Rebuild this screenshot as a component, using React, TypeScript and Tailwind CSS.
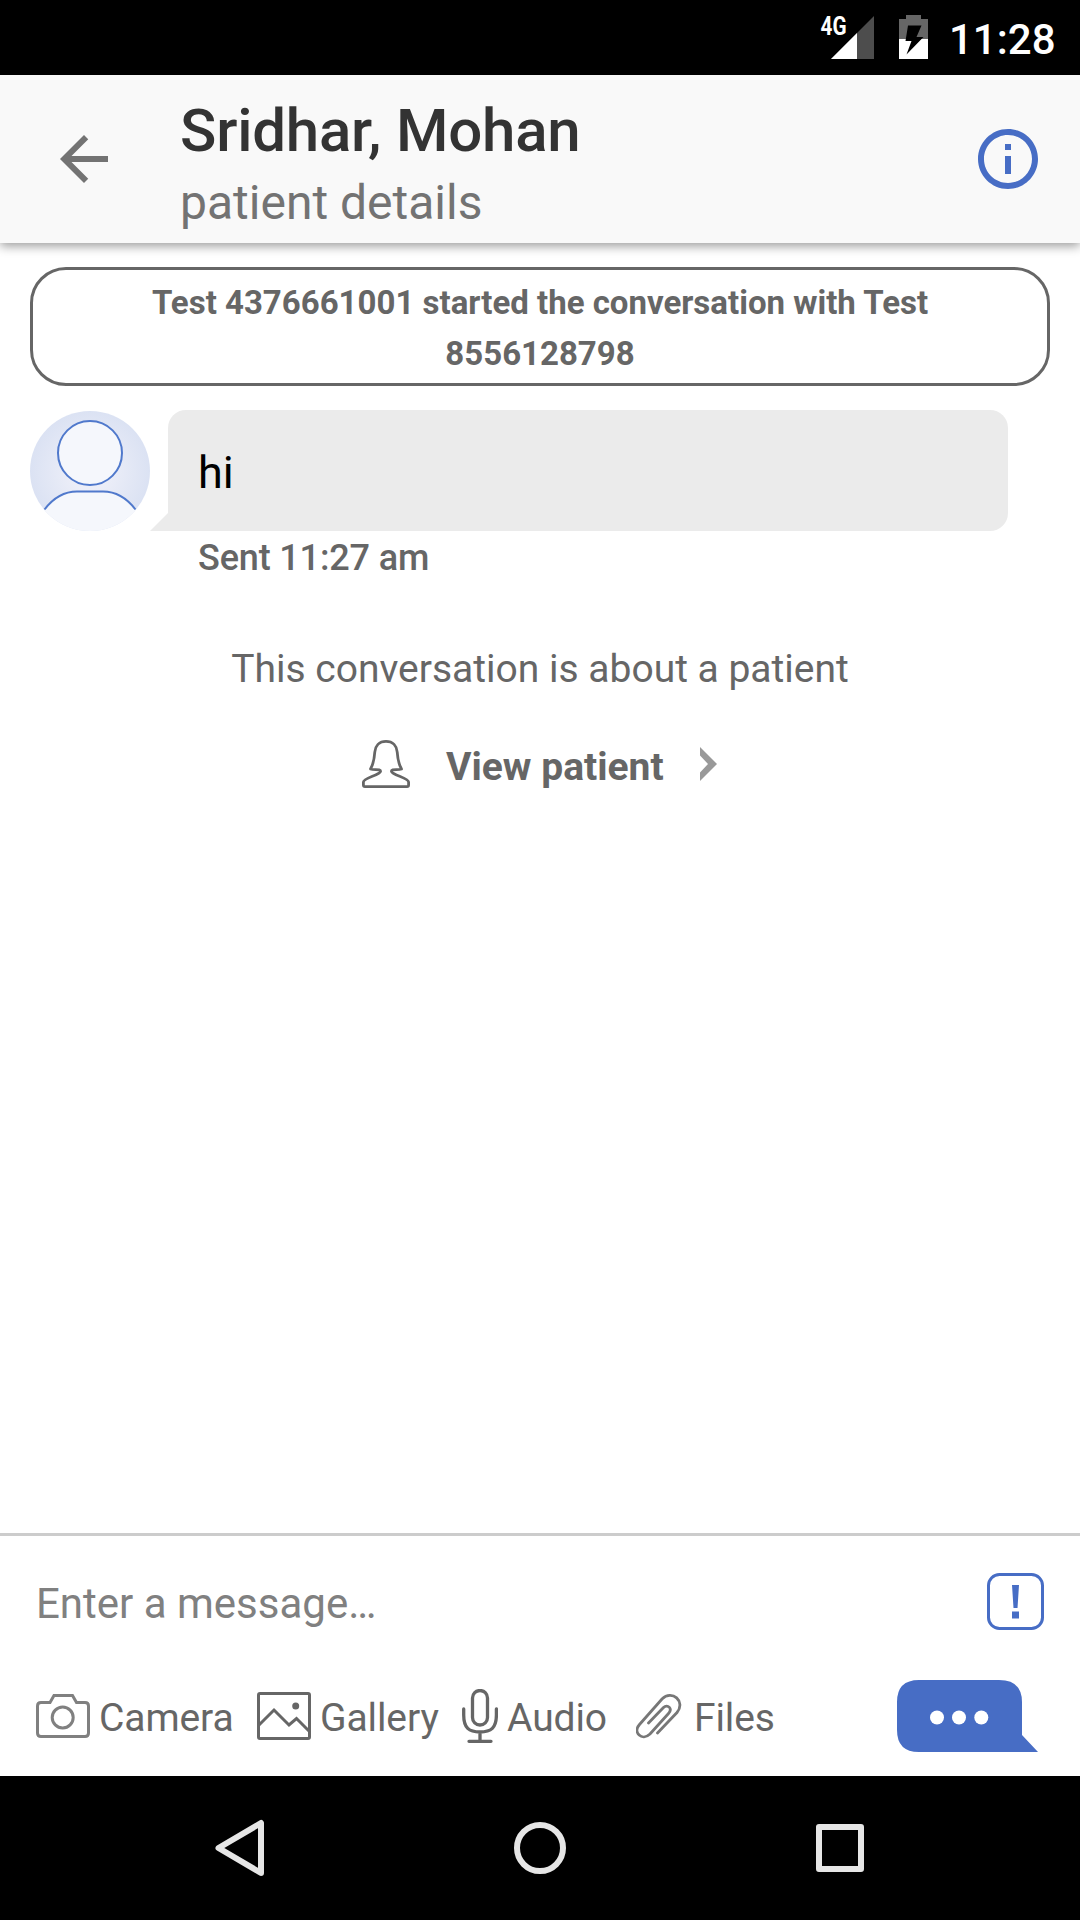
import React from "react";

const BLUE = "#476dc5";

function StatusBar() {
  return (
    <div className="flex h-[75px] shrink-0 items-start bg-black pl-[820px] text-white">
      <div className="flex w-[54px] shrink-0">
        <svg width="56" height="75" viewBox="820 0 56 75" className="shrink-0">
          <path d="M831 59 L874 16 V59 Z" fill="#4d4d4d" />
          <path d="M831 59 L857 33 V59 Z" fill="#fff" />
          <text x="820.5" y="35" fontFamily="Roboto" fontWeight="700" fontSize="25" textLength="26" lengthAdjust="spacingAndGlyphs" fill="#fff">4G</text>
        </svg>
      </div>
      <svg width="29" height="75" viewBox="899 0 29 75" className="ml-[25px] shrink-0">
        <path d="M906 15 H921 V19 H928 V39 H899 V19 H906 Z" fill="#666" />
        <path d="M899 39 H928 V59 H899 Z" fill="#fff" />
        <path d="M908 25.5 H921.5 L916.5 37 H923.5 L906.5 54.500 L911.500 41 H905.500 Z" fill="#000" />
      </svg>
      <span className="ml-[21px] mt-[15px] text-[42px] leading-[49px] font-medium">11:28</span>
    </div>
  );
}

function Header() {
  return (
    <header className="relative z-10 flex h-[168px] shrink-0 items-center bg-[#f9f9f9] px-9 shadow-[0_3px_10px_rgba(0,0,0,0.4)]">
      <svg width="72" height="72" viewBox="0 0 24 24" className="ml-3 shrink-0">
        <path fill="#737373" d="M20 11H7.830l5.590-5.590L12 4l-8 8 8 8 1.410-1.410L7.830 13H20v-2z" />
      </svg>
      <div className="ml-[60px] flex flex-1 flex-col pt-[15px]">
        <h1 className="text-[60px] leading-[72px] font-medium tracking-[-0.2px] text-[#333]">Sridhar, Mohan</h1>
        <p className="text-[48px] leading-[72px] text-[#737373]">patient details</p>
      </div>
      <svg width="72" height="72" viewBox="0 0 24 24" className="shrink-0">
        <path fill={BLUE} d="M11 17h2v-6h-2v6zm1-15C6.480 2 2 6.480 2 12s4.480 10 10 10 10-4.480 10-10S17.520 2 12 2zm0 18c-4.410 0-8-3.590-8-8s3.590-8 8-8 8 3.590 8 8-3.590 8-8 8zM11 9h2V7h-2v2z" />
      </svg>
    </header>
  );
}

function Avatar() {
  return (
    <svg width="120" height="121" viewBox="30 410 120 121" className="shrink-0">
      <defs>
        <radialGradient id="halo">
          <stop offset="0.3" stopColor="#eceef8" />
          <stop offset="1" stopColor="#dbe2f3" />
        </radialGradient>
        <clipPath id="disc">
          <circle cx="90" cy="471" r="60" />
        </clipPath>
      </defs>
      <circle cx="90" cy="471" r="60" fill="url(#halo)" />
      <path d="M44 510 C54 497 64 491.500 77 491.500 H103 C116 491.500 126 497 136 510 L136 540 H44 Z" fill="#f5f7fc" clipPath="url(#disc)" />
      <path d="M44.500 509.500 C54 497 64 491.500 77 491.500 H103 C116 491.500 126 497 135.500 509.500" fill="none" stroke="#5079cc" strokeWidth="2" />
      <circle cx="90" cy="453" r="32" fill="#f5f7fc" stroke="#5079cc" strokeWidth="2" />
    </svg>
  );
}

function Message() {
  return (
    <div className="mt-6 flex">
      <Avatar />
      <svg width="18" height="18" viewBox="0 0 18 18" className="shrink-0 self-start mt-[103px]">
        <path d="M18 0 V18 H0 Z" fill="#ebebeb" />
      </svg>
      <div className="h-[121px] w-[840px] rounded-[18px] rounded-bl-none bg-[#ebebeb] px-[30px] pt-[36px]">
        <p className="text-[45px] leading-[53px] text-black">hi</p>
      </div>
    </div>
  );
}

function ToolLabel({ children }: { children: React.ReactNode }) {
  return <span className="block pt-[3px] text-[39px] leading-[46px] tracking-[-0.1px] text-[#666]">{children}</span>;
}

function Composer() {
  return (
    <section className="h-[243px] shrink-0 border-t-[3px] border-[#ccc] bg-white">
      <div className="flex h-[132px] items-center justify-between pl-9 pr-9">
        <span className="pt-[2px] text-[42px] leading-[49px] text-[#808080]">Enter a message…</span>
        <svg width="57" height="57" viewBox="0 0 57 57" className="mt-[-1px]">
          <rect x="1.500" y="1.500" width="54" height="54" rx="11" fill="none" stroke={BLUE} strokeWidth="3" />
          <path d="M25 12 H32 L30.500 35 H26.500 Z M25 38.500 H32 V45.500 H25 Z" fill={BLUE} />
        </svg>
      </div>
      <div className="flex h-[96px] items-center pl-9 pr-[42px]">
        <svg width="54" height="44" viewBox="36 1694 54 44" fill="none" stroke="#808080" strokeWidth="3" className="shrink-0">
          <path d="M41 1702.500 H50 L54 1695.500 H72.500 L76.500 1702.500 H85 Q88.500 1702.500 88.500 1706 V1733 Q88.500 1736.500 85 1736.500 H41 Q37.500 1736.500 37.500 1733 V1706 Q37.500 1702.500 41 1702.500 Z" />
          <circle cx="62.700" cy="1717.500" r="10.500" />
        </svg>
        <span className="ml-[9px] w-[148px]"><ToolLabel>Camera</ToolLabel></span>
        <svg width="54" height="48" viewBox="257 1692 54 48" fill="none" stroke="#666" strokeWidth="3" className="shrink-0 ml-[10px]">
          <rect x="258.500" y="1693.500" width="51" height="45" rx="1.500" />
          <path d="M259 1725 L274 1710 L289 1725 L296.500 1718.500 L310 1732" />
          <circle cx="295.700" cy="1706" r="3.500" fill="#666" stroke="none" />
        </svg>
        <span className="ml-[9px] w-[132px]"><ToolLabel>Gallery</ToolLabel></span>
        <svg width="36" height="54" viewBox="462 1689 36 54" fill="none" stroke="#666" strokeWidth="3.300" strokeLinecap="round" className="shrink-0 ml-[10px]">
          <rect x="472.500" y="1690.500" width="15" height="34.500" rx="7.500" />
          <path d="M463.700 1709 V1715 C463.700 1728 469 1732 480 1732 C491 1732 496.400 1728 496.400 1715 V1709 M480 1732 V1741 M469 1741.300 H491" />
        </svg>
        <span className="ml-[9px] w-[118px]"><ToolLabel>Audio</ToolLabel></span>
        <svg width="46" height="46" viewBox="636 1693.500 46 46" fill="none" stroke="#777" strokeWidth="2.800" strokeLinecap="round" className="shrink-0 ml-[11px]">
          <path d="M648.500 1723.500 L663.500 1708 C667.500 1704 673 1709 668.500 1714 L650 1734.500 C642 1742 632.500 1733 639.500 1725 L662 1699.500 C672 1689.500 686 1702 677 1713 L657.500 1733.500" />
        </svg>
        <span className="ml-[12px] flex-1"><ToolLabel>Files</ToolLabel></span>
        <svg width="141" height="72" viewBox="897 1680 141 72" className="shrink-0">
          <path d="M919 1680 H999 Q1022 1680 1022 1702 V1735 L1038 1752 H919 Q897 1752 897 1730 V1702 Q897 1680 919 1680 Z" fill={BLUE} />
          <circle cx="937" cy="1717.500" r="7" fill="#fff" />
          <circle cx="959" cy="1717.500" r="7" fill="#fff" />
          <circle cx="981.300" cy="1717.500" r="7" fill="#fff" />
        </svg>
      </div>
    </section>
  );
}

function NavBar() {
  return (
    <nav className="flex h-36 shrink-0 items-center bg-black pl-[210px] pr-[210px] justify-between">
      <svg width="60" height="60" viewBox="210 1818 60 60" fill="none" stroke="#e6e6e6" strokeWidth="6" strokeLinejoin="round">
        <path d="M261 1823 V1873 L218.500 1848 Z" />
      </svg>
      <svg width="60" height="60" viewBox="0 0 60 60" fill="none" stroke="#e6e6e6" strokeWidth="6">
        <circle cx="30" cy="30" r="23" />
      </svg>
      <svg width="60" height="60" viewBox="0 0 60 60" fill="none" stroke="#e6e6e6" strokeWidth="6" strokeLinejoin="round">
        <path d="M9 9 H51 V51 H9 Z" />
      </svg>
    </nav>
  );
}

export default function App() {
  return (
    <div className="flex h-[1920px] w-[1080px] flex-col overflow-hidden bg-white font-[Roboto,sans-serif]">
      <StatusBar />
      <Header />
      <main className="flex flex-1 flex-col px-[30px] pt-6">
        <div className="h-[119px] rounded-[36px] border-[3px] border-[#666] px-24 pt-[7px] text-center text-[33px] leading-[51px] font-bold text-[#666]">
          Test 4376661001 started the conversation with Test 8556128798
        </div>
        <Message />
        <p className="ml-[168px] mt-[6px] text-[36px] leading-[42px] font-medium tracking-[-0.15px] text-[#666]">Sent 11:27 am</p>
        <p className="mt-[67px] text-center text-[39px] leading-[46px] text-[#666]">This conversation is about a patient</p>
        <div className="mt-[37px] flex h-[70px] items-center pl-[332px]">
          <svg width="48" height="48" viewBox="362 740 48 48" fill="none" stroke="#666" strokeWidth="2.800" strokeLinejoin="round" className="shrink-0">
            <path d="M386 741.400 C379 741.400 375.300 746 374.800 752 C374.300 759 373.500 764 370.500 769 C374 770.500 381 768.500 380.500 771.500 C380 775 363.400 778 363.400 782 V785 Q363.400 786.600 365 786.600 H407 Q408.600 786.600 408.600 785 V782 C408.600 778 392 775 391.500 771.500 C391 768.500 398 770.500 401.500 769 C398.500 764 397.700 759 397.200 752 C396.700 746 393 741.400 386 741.400 Z" />
          </svg>
          <span className="ml-[36px] pt-[5px] text-[39px] leading-[46px] font-bold text-[#666]">View patient</span>
          <svg width="17" height="34" viewBox="0 0 17 34" className="ml-[36px] shrink-0">
            <path d="M0 0 L17 17 L0 34 V25.500 L8 17 L0 8.500 Z" fill="#999" />
          </svg>
        </div>
      </main>
      <Composer />
      <NavBar />
    </div>
  );
}
